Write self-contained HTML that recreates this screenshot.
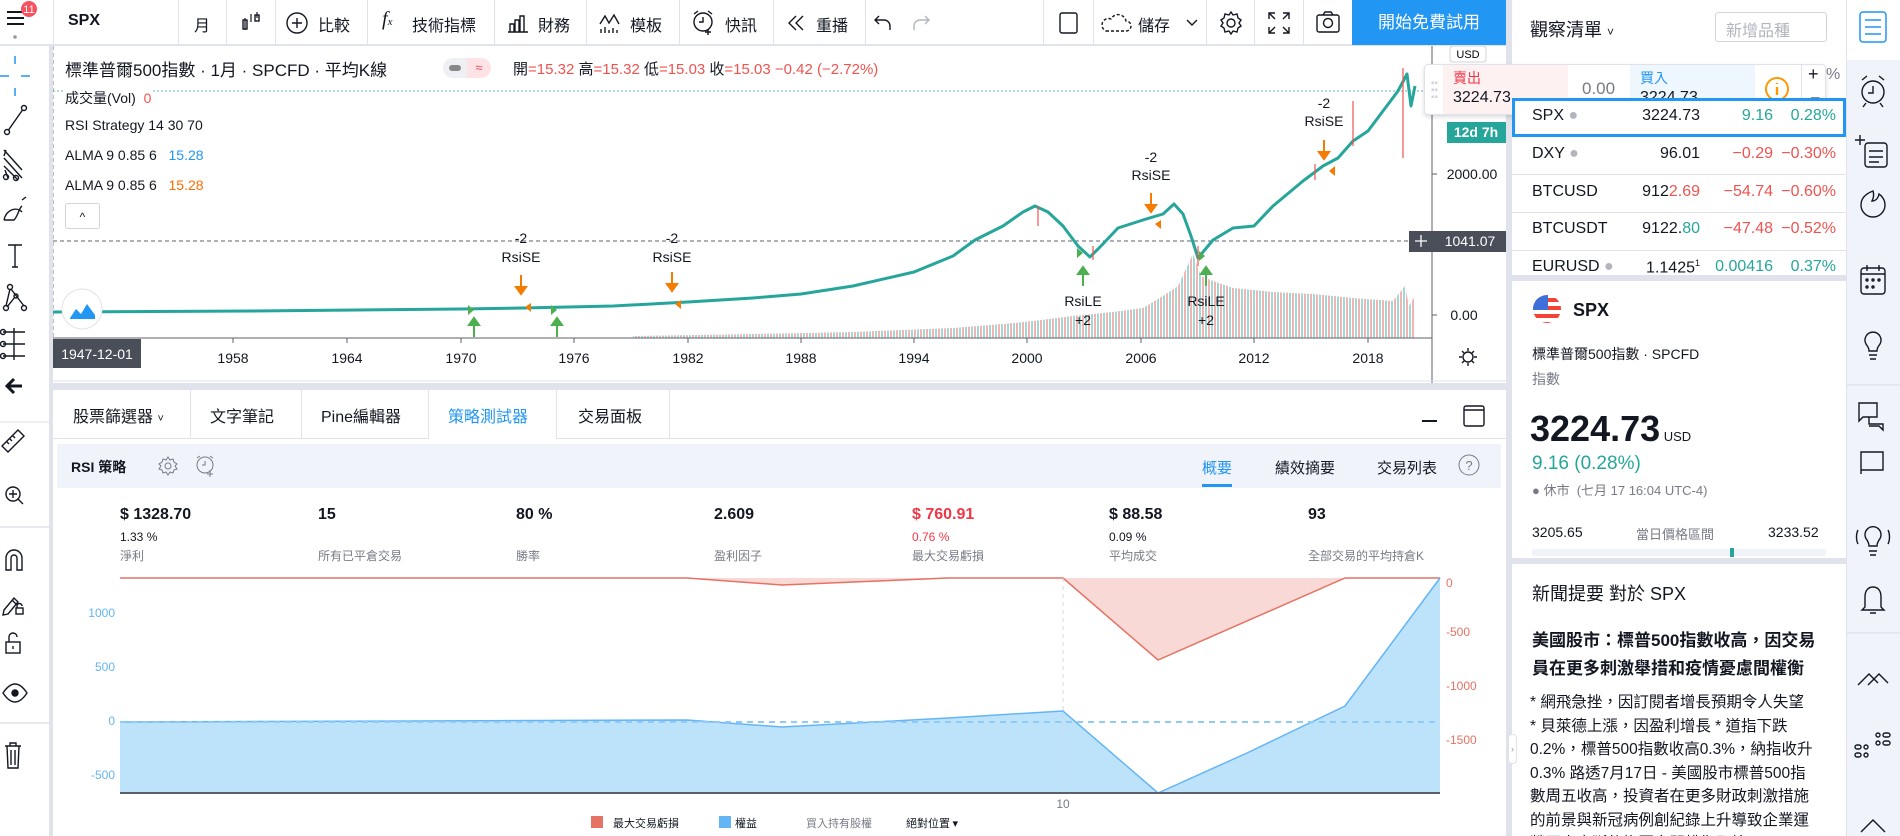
<!DOCTYPE html>
<html><head><meta charset="utf-8">
<style>
*{margin:0;padding:0;box-sizing:border-box}
body{width:1900px;height:836px;overflow:hidden;background:#e0e3eb;font-family:"Liberation Sans","Noto Sans CJK TC",sans-serif;color:#131722;position:relative}
.a{position:absolute;white-space:nowrap}
.vd{position:absolute;top:0;width:1px;height:45px;background:#e0e3eb}
.ic{stroke:#131722;fill:none;stroke-width:1.4}
.tb{font-size:16px}
.red{color:#ef5350}.tea{color:#26a69a}.blu{color:#2196f3}.gry{color:#787b86}
.wl{font-size:16px}
.row{position:absolute;left:1512px;width:334px;height:38px;border-bottom:1px solid #e0e3eb;background:#fff}
.stv{font-size:16px;font-weight:bold;color:#131722}
.sts{font-size:12px;color:#131722}
.stl{font-size:12px;color:#787b86}
</style></head><body>

<div class="a" style="left:0;top:0;width:1506px;height:45px;background:#fff;border-bottom:1px solid #e0e3eb"></div>
<div class="a" style="left:1512px;top:0;width:334px;height:98px;background:#fff"></div>
<div class="a" style="left:0;top:46px;width:49px;height:790px;background:#fff"></div>
<div class="a" style="left:53px;top:46px;width:1453px;height:337px;background:#fff"></div>
<div class="a" style="left:53px;top:390px;width:1453px;height:446px;background:#fff"></div>
<div class="a" style="left:1847px;top:0;width:53px;height:836px;background:#f0f3fa"></div>
<div class="a" style="left:1847px;top:0;width:53px;height:60px;background:#fff"></div>

<svg class="a" style="left:0;top:0" width="50" height="45"><path d="M7 12h17M7 18h17M7 24h17" stroke="#131722" stroke-width="2"/><circle cx="15" cy="37" r="1.8" fill="#999"/><circle cx="29" cy="9" r="8" fill="#f7525f"/><text x="29" y="13" font-size="11" fill="#fff" text-anchor="middle" font-family="Liberation Sans">11</text></svg>
<div class="a" style="left:53px;top:0;width:1px;height:45px;background:#e0e3eb"></div>
<div class="a tb" style="left:68px;top:12px;font-weight:bold">SPX</div>
<div class="vd" style="left:178px"></div>
<div class="a tb" style="left:194px;top:12px">月</div>
<div class="vd" style="left:226px"></div>
<svg class="a" style="left:240px;top:10px" width="24" height="26"><path d="M5 8v12M11 4v8M17 2v6" stroke="#131722" stroke-width="1.2"/><rect x="3" y="10" width="4" height="9" class="ic" stroke-width="1.2"/><rect x="15" y="5" width="4" height="6" class="ic" stroke-width="1.2"/></svg>
<div class="vd" style="left:275px"></div>
<svg class="a" style="left:285px;top:11px" width="24" height="24"><circle cx="12" cy="12" r="10" class="ic"/><path d="M12 7v10M7 12h10" class="ic"/></svg>
<div class="a tb" style="left:318px;top:12px">比較</div>
<div class="vd" style="left:367px"></div>
<div class="a" style="left:382px;top:8px;font-size:20px;font-style:italic;font-family:'Liberation Serif',serif">f<span style="font-size:11px">x</span></div>
<div class="a tb" style="left:412px;top:12px">技術指標</div>
<div class="vd" style="left:494px"></div>
<svg class="a" style="left:506px;top:12px" width="24" height="22"><path d="M2 20h20M4 20v-8h4v8M9 20v-12h4v12M14 20v-16h4v16" class="ic"/></svg>
<div class="a tb" style="left:538px;top:12px">財務</div>
<div class="vd" style="left:586px"></div>
<svg class="a" style="left:598px;top:12px" width="24" height="22"><path d="M2 12l5-8 4 7 5-8 5 9" class="ic"/><path d="M3 21v-4M7 21v-6M11 21v-3M15 21v-5M19 21v-3" class="ic"/></svg>
<div class="a tb" style="left:630px;top:12px">模板</div>
<div class="vd" style="left:679px"></div>
<svg class="a" style="left:691px;top:9px" width="26" height="28"><circle cx="12" cy="13" r="9" class="ic"/><path d="M12 8v5h-4M3 5l4-3M21 5l-4-3M17 20v6M14 23h6" class="ic"/></svg>
<div class="a tb" style="left:725px;top:12px">快訊</div>
<div class="vd" style="left:773px"></div>
<svg class="a" style="left:787px;top:14px" width="20" height="18"><path d="M9 2l-7 7 7 7M16 2l-7 7 7 7" class="ic"/></svg>
<div class="a tb" style="left:816px;top:12px">重播</div>
<div class="vd" style="left:865px"></div>
<svg class="a" style="left:874px;top:14px" width="20" height="18"><path d="M5 2l-4 4 4 4M1 6h9a6 6 0 0 1 6 6v4" class="ic"/></svg>
<svg class="a" style="left:910px;top:14px" width="20" height="18"><path d="M15 2l4 4-4 4M19 6h-9a6 6 0 0 0-6 6v4" stroke="#b2b5be" stroke-width="1.4" fill="none"/></svg>
<div class="vd" style="left:1043px"></div>
<svg class="a" style="left:1057px;top:11px" width="24" height="24"><rect x="3" y="2" width="17" height="20" rx="2" class="ic"/></svg>
<div class="vd" style="left:1093px"></div>
<svg class="a" style="left:1100px;top:12px" width="32" height="22"><path d="M6 19h20a5 5 0 0 0 0-10 8 8 0 0 0-15-2 6 6 0 0 0-5 12z" class="ic" stroke-dasharray="3 2"/></svg>
<div class="a tb" style="left:1138px;top:12px">儲存</div>
<svg class="a" style="left:1186px;top:19px" width="12" height="8"><path d="M1 1l5 5 5-5" class="ic"/></svg>
<div class="vd" style="left:1206px"></div>
<svg class="a" style="left:1218px;top:10px" width="26" height="26"><circle cx="13" cy="13" r="4" class="ic"/><path d="M13 2l2 3 4-1 1 4 3 2-2 3 2 3-3 2-1 4-4-1-2 3-2-3-4 1-1-4-3-2 2-3-2-3 3-2 1-4 4 1z" class="ic"/></svg>
<div class="vd" style="left:1254px"></div>
<svg class="a" style="left:1267px;top:11px" width="24" height="24"><path d="M2 8V2h6M2 2l6 6M22 8V2h-6M22 2l-6 6M2 16v6h6M2 22l6-6M22 16v6h-6M22 22l-6-6" class="ic"/></svg>
<div class="vd" style="left:1303px"></div>
<svg class="a" style="left:1315px;top:10px" width="26" height="24"><rect x="2" y="5" width="22" height="17" rx="2" class="ic"/><path d="M8 5l2-3h6l2 3" class="ic"/><circle cx="13" cy="13" r="4.5" class="ic"/></svg>
<div class="a" style="left:1352px;top:0;width:154px;height:45px;background:#2196f3;color:#fff;font-size:17px;text-align:center;line-height:45px">開始免費試用</div>

<div class="a" style="left:1530px;top:16px;font-size:18px">觀察清單 <span style="font-size:12px">˅</span></div>
<div class="a" style="left:1715px;top:12px;width:112px;height:30px;border:1px solid #d1d4dc;border-radius:3px;color:#b2b5be;font-size:16px;padding:4px 10px">新增品種</div>

<svg class="a" style="left:0;top:50px" width="49" height="700">
<g stroke="#2196f3" stroke-width="1.5"><path d="M15 1v8M15 33v8M0 21h9M21 21h9" transform="translate(0,5)"/></g>
<g class="ic"><circle cx="7" cy="82" r="2.5"/><circle cx="24" cy="58" r="2.5"/><path d="M8.5 80l14-20"/>
<path d="M4 100l18 20M4 108l18 20M4 116l14 14M6 100l-2 6M8 128l-3-8" /><circle cx="6" cy="127" r="2.5"/><circle cx="16" cy="128" r="2.5"/>
<path d="M4 170c2-10 12-14 18-8M4 170h10c4-4 5-12 8-14M22 150l4-3"/>
<path d="M8 195h14M15 195v22M12 217h6"/>
<circle cx="6" cy="258" r="2.5"/><circle cx="10" cy="237" r="2.5"/><circle cx="24" cy="258" r="2.5"/><circle cx="16" cy="246" r="2"/><path d="M6 256l4-17M11 239l13 17M7 257l8-10"/>
<path d="M3 282h22M3 294h22M3 306h22M14 278v32"/><circle cx="3" cy="282" r="2.5"/><circle cx="3" cy="294" r="2.5"/><circle cx="3" cy="306" r="2.5"/>
</g>
<path d="M22 336h-14M14 329l-7 7 7 7" stroke="#131722" stroke-width="3" fill="none"/>
<line x1="0" y1="372" x2="49" y2="372" stroke="#e0e3eb"/>
<g class="ic"><path d="M2 396l16-16 6 6-16 16z M7 392l2 2M10 389l2 2M13 386l2 2"/>
<circle cx="13" cy="444" r="7"/><path d="M18 449l5 5M13 440v8M9 444h8"/>
<line x1="0" y1="477" x2="49" y2="477" stroke="#e0e3eb"/>
<path d="M6 520v-12a8 8 0 0 1 16 0v12h-5v-12a3 3 0 0 0-6 0v12z"/>
<path d="M4 560l10-12 4 4-10 12-5 1zM12 550l4 4"/><rect x="16" y="558" width="7" height="6"/><path d="M17 558v-2a2.5 2.5 0 0 1 5 0"/>
<rect x="6" y="592" width="14" height="11"/><path d="M9 592v-5a4 4 0 0 1 8 0M13 596v3"/>
<path d="M3 643c4-6 8-9 12-9s8 3 12 9c-4 6-8 9-12 9s-8-3-12-9z"/><circle cx="15" cy="643" r="3" fill="#131722"/>
<line x1="0" y1="673" x2="49" y2="673" stroke="#e0e3eb"/>
</g>
</svg>
<svg class="a" style="left:0;top:740px" width="49" height="40"><path d="M5 6h16M10 6V3h6v3M7 6l1 22h10l1-22M11 10v15M15 10v15" class="ic"/></svg>

<!-- CHART -->
<svg class="a" style="left:53px;top:46px" width="1453" height="337">
<defs>
<pattern id="vp" width="6" height="300" patternUnits="userSpaceOnUse"><rect x="0" width="2" height="300" fill="#80cbc4"/><rect x="3" width="2" height="300" fill="#ef9a9a"/></pattern>
</defs>
<line x1="0" y1="45" x2="1379" y2="45" stroke="#26a69a" stroke-dasharray="2 2" stroke-width="0.8"/>
<line x1="0" y1="195" x2="1356" y2="195" stroke="#5d606b" stroke-dasharray="4 3"/>
<line x1="0" y1="0" x2="0" y2="292" stroke="#5d606b" stroke-dasharray="4 3" stroke-width="0.8"/>
<path d="M580 292 L580 290 700 288 800 286 900 282 950 278 980 275 1020 270 1060 266 1090 262 1110 250 1125 240 1140 208 1148 230 1160 235 1180 242 1220 246 1260 248 1300 252 1340 255 1352 240 1356 260 1362 250 1362 292Z" fill="url(#vp)" opacity="0.75"/>
<path d="M0 266 L200 265 408 263 470 262 560 260 635 256 700 252 748 248 800 240 861 226 900 210 922 194 950 180 970 166 982 160 995 166 1010 180 1025 200 1037 211 1048 200 1065 182 1090 174 1110 168 1121 158 1130 168 1138 190 1145 212 1160 194 1180 182 1201 180 1220 160 1250 135 1270 120 1285 112 1300 95 1315 85 1330 65 1345 45 1354 28 1358 60 1362 40" stroke="#26a69a" stroke-width="3" fill="none" stroke-linejoin="round"/>
<path d="M1350 22v90M1300 55v45M985 160v20M1040 200v14M1145 200v20M1262 118v16" stroke="#ef5350" stroke-width="1.2"/>
<g font-size="14" text-anchor="middle" fill="#131722" font-family="Liberation Sans">
<text x="468" y="197">-2</text><text x="468" y="216">RsiSE</text>
<text x="619" y="197">-2</text><text x="619" y="216">RsiSE</text>
<text x="1098" y="116">-2</text><text x="1098" y="134">RsiSE</text>
<text x="1271" y="62">-2</text><text x="1271" y="80">RsiSE</text>
<text x="1030" y="260">RsiLE</text><text x="1030" y="279">+2</text>
<text x="1153" y="260">RsiLE</text><text x="1153" y="279">+2</text>
</g>
<g stroke="#f57c00" stroke-width="2" fill="#f57c00">
<path d="M468 229v14"/><path d="M463 241l5 7 5-7z"/>
<path d="M619 226v14"/><path d="M614 238l5 7 5-7z"/>
<path d="M1098 147v14"/><path d="M1093 159l5 7 5-7z"/>
<path d="M1271 94v14"/><path d="M1266 106l5 7 5-7z"/>
</g>
<g fill="#f57c00"><path d="M478 257l-6 4 6 5z"/><path d="M628 254l-6 4 6 5z"/><path d="M1108 174l-6 4 6 5z"/><path d="M1282 120l-6 5 6 5z"/></g>
<g stroke="#4caf50" stroke-width="2" fill="#4caf50">
<path d="M421 291v-14"/><path d="M416 279l5-7 5 7z"/>
<path d="M504 291v-14"/><path d="M499 279l5-7 5 7z"/>
<path d="M1030 240v-14"/><path d="M1025 228l5-7 5 7z"/>
<path d="M1153 240v-14"/><path d="M1148 228l5-7 5 7z"/>
</g>
<g fill="#4caf50"><path d="M415 259l6 5-6 5z"/><path d="M498 259l6 5-6 5z"/><path d="M1024 202l6 5-6 5z"/><path d="M1146 205l6 5-6 5z"/></g>
<circle cx="29" cy="263" r="20" fill="#fff" stroke="#e0e3eb"/>
<path d="M17 272l6-9 5 5 6-10 8 11v4H17z" fill="#2196f3"/>
<line x1="0" y1="292" x2="1379" y2="292" stroke="#5d606b"/>
<line x1="1379" y1="0" x2="1379" y2="337" stroke="#5d606b"/>
<g stroke="#5d606b"><path d="M180 292v5M294 292v5M408 292v5M521 292v5M635 292v5M748 292v5M861 292v5M974 292v5M1088 292v5M1201 292v5M1315 292v5"/><path d="M1379 128h5M1379 195h5M1379 269h5"/></g>
<g font-size="14" fill="#131722" text-anchor="middle" font-family="Liberation Sans">
<text x="180" y="317">1958</text><text x="294" y="317">1964</text><text x="408" y="317">1970</text><text x="521" y="317">1976</text><text x="635" y="317">1982</text><text x="748" y="317">1988</text><text x="861" y="317">1994</text><text x="974" y="317">2000</text><text x="1088" y="317">2006</text><text x="1201" y="317">2012</text><text x="1315" y="317">2018</text>
<text x="1419" y="133">2000.00</text><text x="1411" y="274">0.00</text></g>
<rect x="0" y="293" width="88" height="29" fill="#4a4e59"/><text x="44" y="313" font-size="14" fill="#fff" text-anchor="middle" font-family="Liberation Sans">1947-12-01</text>
<rect x="1356" y="185" width="97" height="21" fill="#4a4e59"/><path d="M1362 195h12M1368 189v12" stroke="#fff" stroke-width="1.3"/><text x="1417" y="200" font-size="14" fill="#fff" text-anchor="middle" font-family="Liberation Sans">1041.07</text>
<rect x="1394" y="76" width="59" height="21" fill="#26a69a"/><text x="1423" y="91" font-size="14" fill="#fff" text-anchor="middle" font-family="Liberation Sans" font-weight="bold">12d 7h</text>
<rect x="1397" y="0" width="36" height="16" rx="3" fill="#fff" stroke="#d1d4dc"/><text x="1415" y="12" font-size="11" text-anchor="middle" font-family="Liberation Sans">USD</text>
<g transform="translate(1415,311)" class="ic"><circle r="5"/><path d="M0-9v3M0 6v3M-9 0h3M6 0h3M-6-6l2 2M4 4l2 2M-6 6l2-2M4-4l2-2"/></g>
<line x1="0" y1="335" x2="1453" y2="335" stroke="#e0e3eb"/>
</svg>

<div class="a" style="left:65px;top:56px;font-size:17px">標準普爾500指數 · 1月 · SPCFD · 平均K線</div>
<div class="a" style="left:443px;top:58px;width:48px;height:20px;border-radius:10px;background:#eef0f4"></div>
<div class="a" style="left:449px;top:65px;width:12px;height:6px;border-radius:3px;background:#888"></div>
<div class="a" style="left:467px;top:58px;width:24px;height:20px;border-radius:0 10px 10px 0;background:#fde3e6;color:#ef5350;font-size:13px;text-align:center;line-height:20px">≈</div>
<div class="a" style="left:513px;top:58px;font-size:15px;color:#131722">開<span class="red">=15.32</span> 高<span class="red">=15.32</span> 低<span class="red">=15.03</span> 收<span class="red">=15.03 −0.42 (−2.72%)</span></div>
<div class="a" style="left:65px;top:88px;font-size:14px;background:#fff">成交量(Vol) &nbsp;<span class="red">0</span></div>
<div class="a" style="left:65px;top:117px;font-size:14px">RSI Strategy 14 30 70</div>
<div class="a" style="left:65px;top:147px;font-size:14px">ALMA 9 0.85 6 &nbsp;&nbsp;<span class="blu">15.28</span></div>
<div class="a" style="left:65px;top:177px;font-size:14px">ALMA 9 0.85 6 &nbsp;&nbsp;<span style="color:#ff6d00">15.28</span></div>
<div class="a" style="left:65px;top:203px;width:35px;height:26px;border:1px solid #d1d4dc;border-radius:3px;text-align:center;font-size:12px;line-height:26px;background:#fff">^</div>

<div class="a" style="left:1424px;top:64px;width:402px;height:51px;background:#fff;border:1px solid #e0e3eb;border-radius:4px;box-shadow:0 2px 4px rgba(0,0,0,.15)"></div>
<div class="a" style="left:1443px;top:65px;width:125px;height:49px;background:#fef1f2"></div>
<div class="a" style="left:1630px;top:65px;width:125px;height:49px;background:#eef6fe"></div>
<div class="a" style="left:1431px;top:80px;color:#d1d4dc;font-size:10px;line-height:7px">▪▪<br>▪▪<br>▪▪</div>
<div class="a" style="left:1453px;top:68px;font-size:14px;color:#f23645">賣出</div>
<div class="a" style="left:1453px;top:89px;font-size:16px">3224.73</div>
<div class="a" style="left:1582px;top:79px;font-size:17px;color:#787b86">0.00</div>
<div class="a" style="left:1640px;top:68px;font-size:14px;color:#2196f3">買入</div>
<div class="a" style="left:1640px;top:89px;font-size:16px">3224.73</div>
<svg class="a" style="left:1763px;top:75px" width="28" height="28"><circle cx="14" cy="14" r="11" fill="none" stroke="#ff9800" stroke-width="2"/><path d="M14 12v8M14 8v1" stroke="#ff9800" stroke-width="2.4"/></svg>
<div class="a" style="left:1801px;top:65px;width:1px;height:49px;background:#e0e3eb"></div>
<div class="a" style="left:1808px;top:64px;font-size:18px">+</div>
<div class="a" style="left:1810px;top:88px;font-size:18px">−</div>

<div class="row" style="top:98px;border:3px solid #2196f3;height:39px"></div>
<div class="a wl" style="left:1532px;top:107px">SPX <span style="color:#b2b5be">●</span></div>
<div class="a wl" style="left:1620px;top:107px;width:80px;text-align:right">3224.73</div>
<div class="a wl tea" style="left:1700px;top:107px;width:73px;text-align:right">9.16</div>
<div class="a wl tea" style="left:1773px;top:107px;width:63px;text-align:right">0.28%</div>
<div class="a wl" style="left:1826px;top:66px;color:#787b86">%</div>
<div class="row" style="top:137px"></div>
<div class="a wl" style="left:1532px;top:145px">DXY <span style="color:#b2b5be">●</span></div>
<div class="a wl" style="left:1620px;top:145px;width:80px;text-align:right">96.01</div>
<div class="a wl red" style="left:1700px;top:145px;width:73px;text-align:right">−0.29</div>
<div class="a wl red" style="left:1773px;top:145px;width:63px;text-align:right">−0.30%</div>
<div class="row" style="top:175px"></div>
<div class="a wl" style="left:1532px;top:183px">BTCUSD</div>
<div class="a wl" style="left:1620px;top:183px;width:80px;text-align:right">912<span class="red">2.69</span></div>
<div class="a wl red" style="left:1700px;top:183px;width:73px;text-align:right">−54.74</div>
<div class="a wl red" style="left:1773px;top:183px;width:63px;text-align:right">−0.60%</div>
<div class="row" style="top:213px"></div>
<div class="a wl" style="left:1532px;top:220px">BTCUSDT</div>
<div class="a wl" style="left:1620px;top:220px;width:80px;text-align:right">9122.<span class="tea">80</span></div>
<div class="a wl red" style="left:1700px;top:220px;width:73px;text-align:right">−47.48</div>
<div class="a wl red" style="left:1773px;top:220px;width:63px;text-align:right">−0.52%</div>
<div class="row" style="top:251px;height:24px;border:none;overflow:hidden"></div>
<div class="a wl" style="left:1532px;top:258px;height:17px;overflow:hidden">EURUSD <span style="color:#b2b5be">●</span></div>
<div class="a wl" style="left:1620px;top:258px;width:80px;text-align:right;height:17px;overflow:hidden">1.1425<sup style="font-size:9px">1</sup></div>
<div class="a wl tea" style="left:1700px;top:258px;width:73px;text-align:right;height:17px;overflow:hidden">0.00416</div>
<div class="a wl tea" style="left:1773px;top:258px;width:63px;text-align:right;height:17px;overflow:hidden">0.37%</div>

<div class="a" style="left:1512px;top:281px;width:334px;height:277px;background:#fff"></div>
<svg class="a" style="left:1532px;top:294px" width="30" height="30"><defs><clipPath id="cf"><circle cx="15" cy="15" r="14"/></clipPath></defs><g clip-path="url(#cf)"><rect width="30" height="30" fill="#fff"/><path d="M0 4h30v4H0zM0 12h30v4H0zM0 20h30v4H0zM0 28h30v4H0z" fill="#f44336"/><rect width="16" height="16" fill="#3f6fd8"/></g></svg>
<div class="a" style="left:1573px;top:300px;font-size:18px;font-weight:bold">SPX</div>
<div class="a" style="left:1532px;top:344px;font-size:14px">標準普爾500指數 · SPCFD</div>
<div class="a" style="left:1532px;top:369px;font-size:14px;color:#787b86">指數</div>
<div class="a" style="left:1530px;top:408px;font-size:36px;font-weight:bold">3224.73<span style="font-size:13px;font-weight:normal"> USD</span></div>
<div class="a" style="left:1532px;top:453px;font-size:19px"><span class="tea">9.16 (0.28%)</span></div>
<div class="a" style="left:1532px;top:480px;font-size:13px;color:#787b86">● 休市 &nbsp;(七月 17 16:04 UTC-4)</div>
<div class="a" style="left:1532px;top:524px;font-size:14px">3205.65</div>
<div class="a" style="left:1636px;top:524px;font-size:13px;color:#787b86">當日價格區間</div>
<div class="a" style="left:1768px;top:524px;font-size:14px">3233.52</div>
<div class="a" style="left:1532px;top:549px;width:294px;height:7px;background:#f0f3fa;border-radius:2px"></div>
<div class="a" style="left:1730px;top:548px;width:4px;height:9px;background:#26a69a"></div>

<div class="a" style="left:1512px;top:564px;width:334px;height:272px;background:#fff"></div>
<div class="a" style="left:1532px;top:580px;font-size:18px">新聞提要 對於 SPX</div>
<div class="a" style="left:1532px;top:627px;font-size:17px;font-weight:bold;line-height:28px">美國股市：標普500指數收高，因交易<br>員在更多刺激舉措和疫情憂慮間權衡</div>
<div class="a" style="left:1530px;top:691px;font-size:15.5px;line-height:23.5px;height:145px;overflow:hidden">* 網飛急挫，因訂閱者增長預期令人失望<br>* 貝萊德上漲，因盈利增長 * 道指下跌<br>0.2%，標普500指數收高0.3%，納指收升<br>0.3% 路透7月17日 - 美國股市標普500指<br>數周五收高，投資者在更多財政刺激措施<br>的前景與新冠病例創紀錄上升導致企業運<br>營再次中斷的擔憂之間權衡取捨</div>
<div class="a" style="left:1508px;top:734px;width:9px;height:30px;background:#fff;border:1px solid #e0e3eb;border-radius:4px;font-size:9px;color:#999;text-align:center;line-height:28px">›</div>

<svg class="a" style="left:1847px;top:0" width="53" height="836">
<g stroke="#2196f3" stroke-width="1.5" fill="none"><rect x="13" y="12" width="26" height="30" rx="3"/><path d="M18 20h16M18 27h16M18 34h16"/></g>
<g class="ic" stroke-width="1.5">
<circle cx="26" cy="92" r="11"/><path d="M26 86v7h-5M15 80l5-4M37 80l-5-4M19 103l-3 4M33 103l3 4"/>
<rect x="18" y="143" width="22" height="24" rx="3"/><path d="M22 151h14M22 157h14M22 162h10M8 140h10M13 135v10"/>
<path d="M26 191c-8 3-12 8-12 14a12 12 0 0 0 24 0c0-5-3-9-6-11-1 5-4 7-7 7 2-4 2-7 1-10z"/>
<rect x="14" y="268" width="24" height="26" rx="3"/><path d="M14 274h24M20 265v6M32 265v6"/><circle cx="20" cy="280" r="1"/><circle cx="26" cy="280" r="1"/><circle cx="32" cy="280" r="1"/><circle cx="20" cy="287" r="1"/><circle cx="26" cy="287" r="1"/>
<path d="M19 344a8 8 0 1 1 14 0c-2 3-3 4-3 7h-8c0-3-1-4-3-7zM22 355h8M23 359h6"/>
<line x1="0" y1="385" x2="53" y2="385" stroke="#e0e3eb"/>
<path d="M16 417h14v-14H12v18zM22 417v7h14v6l-4-4H22" />
<path d="M14 470h22v-18H14v22z"/>
<path d="M20 540a8 8 0 1 1 12 0c-1 2-2 3-2 6h-8c0-3-1-4-2-6zM22 551h8M23 555h6M11 530c-2 4-2 10 0 14M41 530c2 4 2 10 0 14"/>
<path d="M26 587c-6 0-8 5-8 10v10l-3 3h22l-3-3v-10c0-5-2-10-8-10zM23 613h6"/>
<line x1="0" y1="633" x2="53" y2="633" stroke="#e0e3eb"/>
<path d="M11 685l11-11 9 9M21 685l11-11 9 9"/>
<circle cx="19" cy="747" r="2"/><circle cx="19" cy="755" r="2"/><rect x="8" y="745" width="6" height="4" rx="2"/><rect x="8" y="753" width="6" height="4" rx="2"/><circle cx="31" cy="735" r="2"/><rect x="36" y="733" width="7" height="4" rx="2"/><rect x="36" y="741" width="7" height="4" rx="2"/><circle cx="31" cy="743" r="2"/>
<path d="M14 832l12-12 12 12"/>
</g></svg>

<div class="a" style="left:53px;top:390px;width:1453px;height:49px;border-bottom:1px solid #e0e3eb"></div>
<div class="a" style="left:73px;top:403px;font-size:16px">股票篩選器 <span style="font-size:11px">˅</span></div>
<div class="vd" style="left:190px;top:390px;height:49px"></div>
<div class="a" style="left:210px;top:403px;font-size:16px">文字筆記</div>
<div class="vd" style="left:301px;top:390px;height:49px"></div>
<div class="a" style="left:321px;top:403px;font-size:16px">Pine編輯器</div>
<div class="vd" style="left:428px;top:390px;height:49px"></div>
<div class="a" style="left:448px;top:403px;font-size:16px;color:#2196f3">策略測試器</div>
<div class="vd" style="left:556px;top:390px;height:49px"></div>
<div class="a" style="left:578px;top:403px;font-size:16px">交易面板</div>
<div class="vd" style="left:669px;top:390px;height:49px"></div>
<div class="a" style="left:429px;top:437px;width:127px;height:3px;background:#fff"></div>
<div class="a" style="left:1422px;top:420px;width:15px;height:2px;background:#131722"></div>
<svg class="a" style="left:1462px;top:404px" width="24" height="24"><rect x="2" y="2" width="20" height="20" rx="2" class="ic"/><path d="M2 6h20" class="ic"/></svg>

<div class="a" style="left:57px;top:444px;width:1444px;height:44px;background:#f0f3fa"></div>
<div class="a" style="left:71px;top:457px;font-size:14px;font-weight:bold">RSI 策略</div>
<svg class="a" style="left:157px;top:455px" width="22" height="22"><circle cx="11" cy="11" r="3" stroke="#787b86" fill="none"/><path d="M11 2l2 3 3-1 1 3 3 2-2 2 2 3-3 1-1 3-3-1-2 3-2-3-3 1-1-3-3-1 2-3-2-2 3-2 1-3 3 1z" stroke="#787b86" fill="none"/></svg>
<svg class="a" style="left:194px;top:453px" width="24" height="26"><circle cx="11" cy="12" r="8" stroke="#787b86" fill="none"/><path d="M11 8v4h-3M3 5l3-2M19 5l-3-2M16 17v7M13 21h6" stroke="#787b86" fill="none"/></svg>
<div class="a" style="left:1202px;top:457px;font-size:15px;color:#2196f3">概要</div>
<div class="a" style="left:1202px;top:484px;width:30px;height:3px;background:#2196f3"></div>
<div class="a" style="left:1275px;top:457px;font-size:15px">績效摘要</div>
<div class="a" style="left:1377px;top:457px;font-size:15px">交易列表</div>
<svg class="a" style="left:1458px;top:454px" width="22" height="22"><circle cx="11" cy="11" r="10" stroke="#787b86" fill="none"/><text x="11" y="16" font-size="13" text-anchor="middle" fill="#787b86" font-family="Liberation Sans">?</text></svg>

<div class="a stv" style="left:120px;top:506px">$ 1328.70</div><div class="a sts" style="left:120px;top:530px">1.33 %</div><div class="a stl" style="left:120px;top:547px">淨利</div>
<div class="a stv" style="left:318px;top:506px">15</div><div class="a stl" style="left:318px;top:547px">所有已平倉交易</div>
<div class="a stv" style="left:516px;top:506px">80 %</div><div class="a stl" style="left:516px;top:547px">勝率</div>
<div class="a stv" style="left:714px;top:506px">2.609</div><div class="a stl" style="left:714px;top:547px">盈利因子</div>
<div class="a stv" style="left:912px;top:506px;color:#f23645">$ 760.91</div><div class="a sts" style="left:912px;top:530px;color:#f23645">0.76 %</div><div class="a stl" style="left:912px;top:547px">最大交易虧損</div>
<div class="a stv" style="left:1109px;top:506px">$ 88.58</div><div class="a sts" style="left:1109px;top:530px">0.09 %</div><div class="a stl" style="left:1109px;top:547px">平均成交</div>
<div class="a stv" style="left:1308px;top:506px">93</div><div class="a stl" style="left:1308px;top:547px">全部交易的平均持倉K</div>

<svg class="a" style="left:0;top:570px" width="1506" height="266">
<path d="M120 8L687 8 782 15 948 8 1063 8 1158 90 1345 8 1440 8Z" fill="#f9d9d5"/>
<path d="M120 8L687 8 782 15 948 8 1063 8 1158 90 1345 8 1440 8" stroke="#e57263" stroke-width="1.5" fill="none"/>
<path d="M120 152L687 150 782 157 948 148 1063 141 1158 223 1247 183 1345 136 1440 8 1440 223 120 223Z" fill="#bde3fb"/>
<path d="M120 152L687 150 782 157 948 148 1063 141 1158 223 1247 183 1345 136 1440 8" stroke="#64b5f6" stroke-width="1.5" fill="none"/>
<line x1="120" y1="152" x2="1440" y2="152" stroke="#90caf9" stroke-width="2" stroke-dasharray="6 5"/>
<line x1="1063" y1="8" x2="1063" y2="223" stroke="#d1d4dc" stroke-dasharray="4 4"/>
<line x1="120" y1="223" x2="1440" y2="223" stroke="#5d606b" stroke-width="2"/>
<g font-size="12" font-family="Liberation Sans" fill="#64b5f6" text-anchor="end"><text x="115" y="47">1000</text><text x="115" y="101">500</text><text x="115" y="155">0</text><text x="115" y="209">-500</text></g>
<g font-size="12" font-family="Liberation Sans" fill="#e57263"><text x="1446" y="17">0</text><text x="1446" y="66">-500</text><text x="1446" y="120">-1000</text><text x="1446" y="174">-1500</text></g>
<text x="1063" y="238" font-size="12" font-family="Liberation Sans" fill="#787b86" text-anchor="middle">10</text>
<rect x="591" y="246" width="12" height="12" fill="#e57263"/><text x="613" y="257" font-size="11" fill="#131722" font-family="Noto Sans CJK TC">最大交易虧損</text>
<rect x="719" y="246" width="12" height="12" fill="#64b5f6"/><text x="735" y="257" font-size="11" fill="#131722" font-family="Noto Sans CJK TC">權益</text>
<text x="806" y="257" font-size="11" fill="#787b86" font-family="Noto Sans CJK TC">買入持有股權</text>
<text x="906" y="257" font-size="11" fill="#131722" font-family="Noto Sans CJK TC">絕對位置 ▾</text>
</svg>
</body></html>
